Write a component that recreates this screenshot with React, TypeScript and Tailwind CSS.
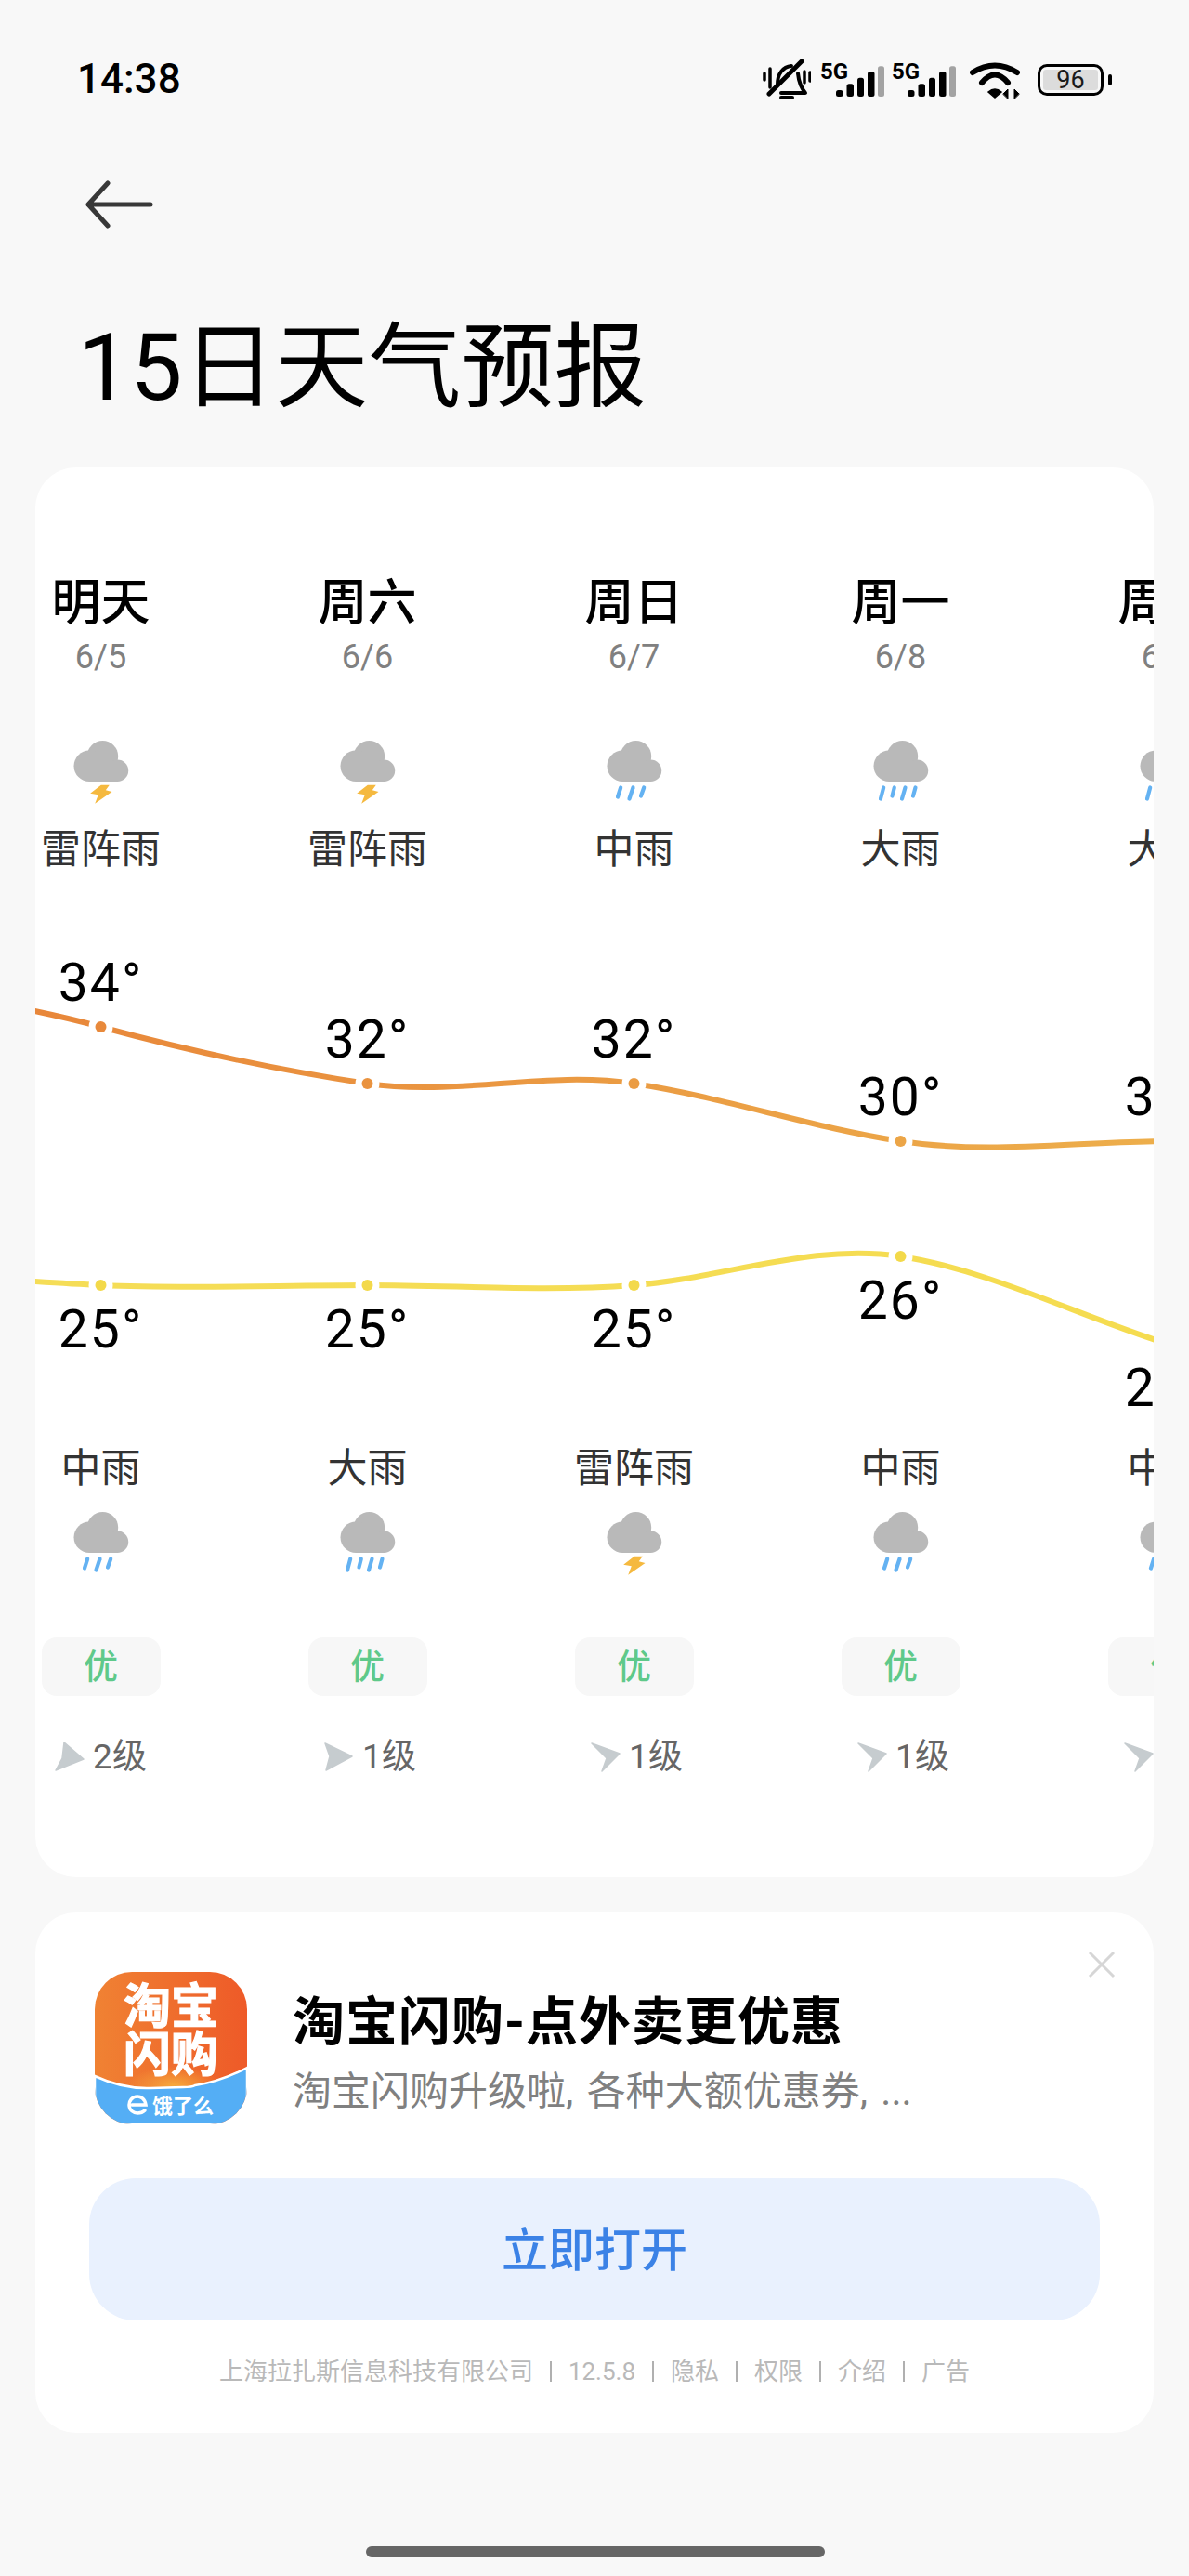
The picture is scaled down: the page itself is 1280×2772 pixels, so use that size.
import React from "react";

const COL = 287;
const CHART_TOP = 939;

type Weather = "thunder" | "medium" | "heavy";

const WIND_NE = "1,1 31,12 12,31 17,17";

const days: {
  name: string;
  date: string;
  day: string;
  dayIcon: Weather;
  night: string;
  nightIcon: Weather;
  wind: string;
  windDir: string;
  high: string;
  low: string;
  highY: number;
  lowY: number;
}[] = [
  { name: "明天", date: "6/5", day: "雷阵雨", dayIcon: "thunder", night: "中雨", nightIcon: "medium", wind: "2级", windDir: "10,0 31,18 1,30 8,17", high: "34°", low: "25°", highY: 1105, lowY: 1383 },
  { name: "周六", date: "6/6", day: "雷阵雨", dayIcon: "thunder", night: "大雨", nightIcon: "heavy", wind: "1级", windDir: "1,1 30,15 2,30 6,15", high: "32°", low: "25°", highY: 1166, lowY: 1383 },
  { name: "周日", date: "6/7", day: "中雨", dayIcon: "medium", night: "雷阵雨", nightIcon: "thunder", wind: "1级", windDir: WIND_NE, high: "32°", low: "25°", highY: 1166, lowY: 1383 },
  { name: "周一", date: "6/8", day: "大雨", dayIcon: "heavy", night: "中雨", nightIcon: "medium", wind: "1级", windDir: WIND_NE, high: "30°", low: "26°", highY: 1228, lowY: 1352 },
  { name: "周二", date: "6/9", day: "大雨", dayIcon: "heavy", night: "中雨", nightIcon: "medium", wind: "1级", windDir: WIND_NE, high: "30°", low: "24°", highY: 1228, lowY: 1446 },
];

// cardinal spline through the day points, one extra point on each side
function curve(ys: number[]) {
  const top = ys.map((y) => y - CHART_TOP);
  const x = (i: number) => (i - 1) * COL + COL / 2;
  const k = 0.7;
  let d = `M${x(0)} ${top[0]}`;
  for (let i = 0; i < top.length - 1; i++) {
    const prev = top[Math.max(i - 1, 0)];
    const next = top[Math.min(i + 2, top.length - 1)];
    const m1 = (top[i + 1] - prev) * k;
    const m2 = (next - top[i]) * k;
    d += ` C${x(i) + COL / 3} ${top[i] + m1 / 3} ${x(i + 1) - COL / 3} ${top[i + 1] - m2 / 3} ${x(i + 1)} ${top[i + 1]}`;
  }
  return d;
}

function WeatherIcon({ type }: { type: Weather }) {
  return (
    <svg width="80" height="80" viewBox="0 0 80 80" className="mx-auto block">
      <g fill="#b9b9b9">
        <circle cx="41.5" cy="24.7" r="16.7" />
        <circle cx="27.2" cy="35.3" r="16.7" />
        <circle cx="57.5" cy="40.3" r="11.7" />
        <rect x="27" y="30" width="31" height="22" />
      </g>
      {type === "thunder" && (
        <polygon points="39.8,55.7 48.8,55.7 44.8,61.3 51.5,63 33.2,75.7 36.8,66.3 28.2,64.7" fill="#f5b93f" />
      )}
      {type === "medium" && (
        <g stroke="#64b2f2" strokeWidth="4.2" strokeLinecap="round">
          <path d="M25.2 58.5L22 68.5" />
          <path d="M38.5 58.5L34.5 70.5" />
          <path d="M50.2 58.5L47 67.5" />
        </g>
      )}
      {type === "heavy" && (
        <g stroke="#64b2f2" strokeWidth="4.2" strokeLinecap="round">
          <path d="M21.2 58.5L18 70.5" />
          <path d="M32.8 58.5L30.5 67.5" />
          <path d="M44.5 58.5L41 70.5" />
          <path d="M55.5 58.5L53 67.5" />
        </g>
      )}
    </svg>
  );
}

function Signal() {
  return (
    <svg width="70" height="40" viewBox="0 0 70 40" className="block overflow-visible">
      <text x="0" y="19" fontSize="24" fontWeight="700" fill="#000">5G</text>
      <rect x="17" y="31" width="7.5" height="7" rx="2.5" fill="#000" />
      <rect x="28.5" y="24.3" width="7.5" height="13.7" rx="2.5" fill="#000" />
      <rect x="40" y="17.7" width="7" height="20.3" rx="2.5" fill="#000" />
      <rect x="51" y="11" width="7.5" height="27" rx="2.5" fill="#000" />
      <rect x="62" y="5.3" width="7" height="32.7" rx="2.5" fill="#a3a3a3" />
    </svg>
  );
}

function StatusBar() {
  return (
    <div className="h-[170px] pt-[60px] pl-[83px] pr-[83px] flex items-start justify-between">
      <span className="text-[44px] leading-[50px] font-medium text-black">14:38</span>
      <div className="flex items-center mt-[4px]">
        <svg width="52" height="44" viewBox="0 0 52 44" fill="none" stroke="#000" strokeLinecap="round" strokeLinejoin="round" className="block">
          <path d="M2 15V22M8 10V30M45 13V25M51 14V23" strokeWidth="3.5" />
          <path d="M7 37L42 2" strokeWidth="5" />
          <path d="M16 27C16 15 22 8 31 7" strokeWidth="4" />
          <path d="M38 15C39 25 41 30 46 36H20" strokeWidth="4" />
          <path d="M20 41H32" strokeWidth="4" />
        </svg>
        <div className="ml-[10px]"><Signal /></div>
        <div className="ml-[7px]"><Signal /></div>
        <svg width="54" height="40" viewBox="0 0 54 40" fill="none" stroke="#000" strokeLinecap="round" className="block ml-[14px]">
          <path d="M3 12Q27 -3 51 12" strokeWidth="6" />
          <path d="M13 23Q27 6 41 23" strokeWidth="6" />
          <path d="M20 33Q27 27 34 33L27 39Z" fill="#000" strokeWidth="1.5" />
          <path d="M36 35L41 30V40Z" fill="#000" strokeWidth="1" />
          <path d="M53 35L48 30V40Z" fill="#000" strokeWidth="1" />
        </svg>
        <div className="ml-[19px] flex items-center">
          <div className="w-[71px] h-[34px] border-[3px] border-black rounded-[10px] p-[3px]">
            <div className="h-full bg-[#dcdcdc] rounded-[3px] flex items-center justify-center text-[27px] leading-none text-[#1a1a1a]">96</div>
          </div>
          <div className="w-[4px] h-[12px] ml-[5px] bg-black rounded-[2px]" />
        </div>
      </div>
    </div>
  );
}

function Chart() {
  const highs = [1055, ...days.map((d) => d.highY), 1228];
  const lows = [1365, ...days.map((d) => d.lowY), 1480];
  return (
    <div className="relative h-[616px] flex">
      <svg width="1435" height="616" viewBox="0 0 1435 616" fill="none" className="absolute left-0 top-0">
        <defs>
          <linearGradient id="hi" gradientUnits="userSpaceOnUse" x1="73" y1="0" x2="1277" y2="0">
            <stop offset="0" stopColor="#e8873a" />
            <stop offset="1" stopColor="#edae4b" />
          </linearGradient>
          <linearGradient id="lo" gradientUnits="userSpaceOnUse" x1="73" y1="0" x2="1277" y2="0">
            <stop offset="0" stopColor="#f5dd57" />
            <stop offset="1" stopColor="#f5dc50" />
          </linearGradient>
        </defs>
        <path d={curve(highs)} stroke="url(#hi)" strokeWidth="6" />
        <path d={curve(lows)} stroke="url(#lo)" strokeWidth="6" />
        {days.map((d, i) => {
          const cx = i * COL + COL / 2;
          return (
            <g key={d.date}>
              <circle cx={cx} cy={d.highY - CHART_TOP} r="13" fill="#fff" />
              <circle cx={cx} cy={d.highY - CHART_TOP} r="6" fill="url(#hi)" />
              <circle cx={cx} cy={d.lowY - CHART_TOP} r="13" fill="#fff" />
              <circle cx={cx} cy={d.lowY - CHART_TOP} r="6" fill="#f3d94a" />
            </g>
          );
        })}
      </svg>
      {days.map((d) => (
        <div key={d.date} className="relative w-[287px] shrink-0 text-center text-[57px] leading-[60px] tracking-[2px] text-black">
          <span className="absolute left-0 right-0" style={{ top: d.highY - CHART_TOP - 77 }}>{d.high}</span>
          <span className="absolute left-0 right-0" style={{ top: d.lowY - CHART_TOP + 18 }}>{d.low}</span>
        </div>
      ))}
    </div>
  );
}

function ForecastCard() {
  return (
    <div className="mx-[38px] mt-[51px] bg-white rounded-[44px] overflow-hidden">
      <div className="w-[1435px] -ml-[73px] pt-[116px] pb-[109px]">
        <div className="flex">
          {days.map((d) => (
            <div key={d.date} className="w-[287px] shrink-0 text-center">
              <div className="text-[53px] leading-[60px] font-medium text-black">{d.name}</div>
              <div className="mt-[8px] text-[36px] leading-[40px] text-[#808080]">{d.date}</div>
              <div className="mt-[62px]"><WeatherIcon type={d.dayIcon} /></div>
              <div className="mt-[20px] text-[43px] leading-[50px] text-[#333333]">{d.day}</div>
            </div>
          ))}
        </div>
        <Chart />
        <div className="flex">
          {days.map((d) => (
            <div key={d.date} className="w-[287px] shrink-0 text-center">
              <div className="text-[43px] leading-[50px] text-[#333333]">{d.night}</div>
              <div className="mt-[14px]"><WeatherIcon type={d.nightIcon} /></div>
              <div className="mt-[63px] mx-auto w-[128px] h-[63px] pt-[2px] rounded-[16px] bg-[#f7f7f7] flex items-center justify-center text-[37px] font-medium text-[#5fc98a]">优</div>
              <div className={`mt-[46px] h-[40px] flex items-center justify-center gap-[9px] text-[37px] text-[#666666] ${d.wind === "1级" ? "pl-[6px]" : ""}`}>
                <svg width="32" height="32" viewBox="0 0 32 32" className="block">
                  <polygon points={d.windDir} fill="#c6cccf" stroke="#c6cccf" strokeWidth="1.5" strokeLinejoin="round" />
                </svg>
                <span>{d.wind}</span>
              </div>
            </div>
          ))}
        </div>
      </div>
    </div>
  );
}

function AppLogo() {
  const cjk = "'Noto Sans CJK SC', sans-serif";
  return (
    <svg width="164" height="164" viewBox="0 0 164 164" className="block shrink-0 rounded-[40px]">
      <defs>
        <linearGradient id="logoBg" x1="0" y1="0" x2="1" y2="0">
          <stop offset="0" stopColor="#f08233" />
          <stop offset="1" stopColor="#ee5a28" />
        </linearGradient>
        <radialGradient id="logoGlow" cx="0.5" cy="0.5" r="0.5">
          <stop offset="0" stopColor="#f6a83c" />
          <stop offset="1" stopColor="#f6a83c" stopOpacity="0" />
        </radialGradient>
      </defs>
      <rect width="164" height="164" fill="url(#logoBg)" />
      <ellipse cx="85" cy="122" rx="50" ry="20" fill="url(#logoGlow)" />
      <path d="M0 112Q30 126 60 125L95 124Q105 124 108 122Q135 118 164 103V164H0Z" fill="#54aef5" stroke="#fff" strokeWidth="2.5" />
      <text fill="#fff" fontWeight="700" fontFamily={cjk} textAnchor="middle">
        <tspan x="82" y="55" fontSize="51" stroke="#fff" strokeWidth="1.2">淘宝</tspan>
        <tspan x="82" y="107" fontSize="51" stroke="#fff" strokeWidth="1.2">闪购</tspan>
        <tspan x="95" y="152" fontSize="22">饿了么</tspan>
      </text>
      <path d="M40 143H55C54 136 49 134 46 134C40 134 37 139 37 143C37 149 42 152 46 152C49 152 52 151 54 149" fill="none" stroke="#fff" strokeWidth="3.5" strokeLinecap="round" />
    </svg>
  );
}

function AdCard() {
  const links = ["12.5.8", "隐私", "权限", "介绍", "广告"];
  return (
    <div className="relative mx-[38px] mt-[38px] h-[560px] bg-white rounded-[44px] px-[58px] pt-[64px]">
      <svg width="30" height="30" viewBox="0 0 30 30" className="absolute right-[41px] top-[41px]" stroke="#d6d6d6" strokeWidth="3">
        <path d="M2 2L28 28M28 2L2 28" />
      </svg>
      <div className="flex items-center pl-[6px]">
        <AppLogo />
        <div className="ml-[49px] pt-[12px]">
          <div className="text-[56px] leading-[64px] tracking-[1px] font-bold text-black">淘宝闪购-点外卖更优惠</div>
          <div className="mt-[18px] text-[42px] leading-[50px] [word-spacing:4px] text-[#808080]">淘宝闪购升级啦, 各种大额优惠券, ...</div>
        </div>
      </div>
      <div className="mt-[58px] h-[153px] pt-[3px] rounded-[50px] bg-[#e9f1fe] flex items-center justify-center text-[50px] font-medium text-[#3b82e6]">立即打开</div>
      <div className="mt-[40px] flex items-center justify-center text-[26px] leading-[30px] text-[#b9b9b9]">
        <span>上海拉扎斯信息科技有限公司</span>
        {links.map((l) => (
          <React.Fragment key={l}>
            <span className="mx-[18px] w-[2px] h-[22px] bg-[#b0b0b0]" />
            <span>{l}</span>
          </React.Fragment>
        ))}
      </div>
    </div>
  );
}

export default function App() {
  return (
    <div className="relative w-[1280px] h-[2772px] overflow-hidden bg-[#f8f8f8] font-['Roboto','Noto_Sans_CJK_SC',sans-serif]">
      <StatusBar />
      <div className="pl-[90px] mt-[24px]">
        <svg width="76" height="52" viewBox="0 0 76 52" fill="none" stroke="#383838" strokeWidth="5" strokeLinecap="round" strokeLinejoin="round" className="block">
          <path d="M72 26H5M26 3L5 26L26 49" />
        </svg>
      </div>
      <h1 className="pl-[84px] mt-[94px] text-[100px] leading-[112px] font-normal text-black">15日天气预报</h1>
      <ForecastCard />
      <AdCard />
      <div className="absolute bottom-[20px] left-[394px] w-[494px] h-[12px] rounded-full bg-[#666666]" />
    </div>
  );
}
